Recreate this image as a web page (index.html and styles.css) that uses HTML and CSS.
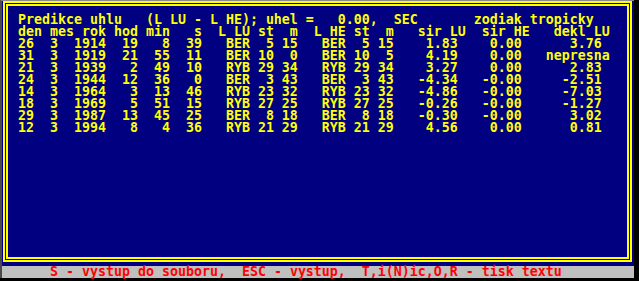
FILE: index.html
```html
<!DOCTYPE html>
<html lang="cs">
<head>
<meta charset="utf-8">
<title>Predikce uhlu</title>
<link rel="stylesheet" href="styles.css">
</head>
<body>
<div class="screen">
  <div class="frame">
    <div class="frame-inner">
<pre class="text">Predikce uhlu   (L LU - L HE); uhel =   0.00,  SEC       zodiak tropicky
den mes rok hod min   s  L LU st  m  L HE st  m   sir LU  sir HE   dekl LU
26  3  1914  19   8  39   BER  5 15   BER  5 15    1.83    0.00      3.76
31  3  1919  21  55  11   BER 10  0   BER 10  5    4.19    0.00   nepresna
21  3  1939   2  49  10   RYB 29 34   RYB 29 34    3.27    0.00      2.83
24  3  1944  12  36   0   BER  3 43   BER  3 43   -4.34   -0.00     -2.51
14  3  1964   3  13  46   RYB 23 32   RYB 23 32   -4.86   -0.00     -7.03
18  3  1969   5  51  15   RYB 27 25   RYB 27 25   -0.26   -0.00     -1.27
29  3  1987  13  45  25   BER  8 18   BER  8 18   -0.30   -0.00      3.02
12  3  1994   8   4  36   RYB 21 29   RYB 21 29    4.56    0.00      0.81</pre>
    </div>
  </div>
  <div class="status">S - vystup do souboru,  ESC - vystup,  T,i(N)ic,O,R - tisk textu</div>
</div>
</body>
</html>
```

FILE: styles.css
```css
html, body {
  margin: 0;
  padding: 0;
  background: #000;
}

body {
  width: 639px;
  height: 281px;
  overflow: hidden;
}

.screen {
  width: 632px;
  height: 277px;
  border-left: 2px solid #4a4a4a;
  border-top: 1px solid #8a8a8a;
  background: #000080;
  display: flex;
  flex-direction: column;
  font-family: "DejaVu Sans Mono", "Liberation Mono", monospace;
  font-weight: bold;
  font-size: 13.29px;
  line-height: 12px;
}

.frame {
  box-sizing: border-box;
  height: 261px;
  margin: 0 2px 0 1px;
  border: 2px solid #ffff00;
  padding: 1px;
}

.frame-inner {
  box-sizing: border-box;
  height: 100%;
  border: 2px solid #ffff00;
  padding: 8px 0 0 10px;
}

.text {
  margin: 0;
  font: inherit;
  line-height: 12px;
  color: #ffff00;
  white-space: pre;
}

.status {
  margin-top: 4px;
  height: 12px;
  background: #c0c0c0;
  color: #ff0000;
  padding-left: 48px;
  white-space: pre;
}
```
